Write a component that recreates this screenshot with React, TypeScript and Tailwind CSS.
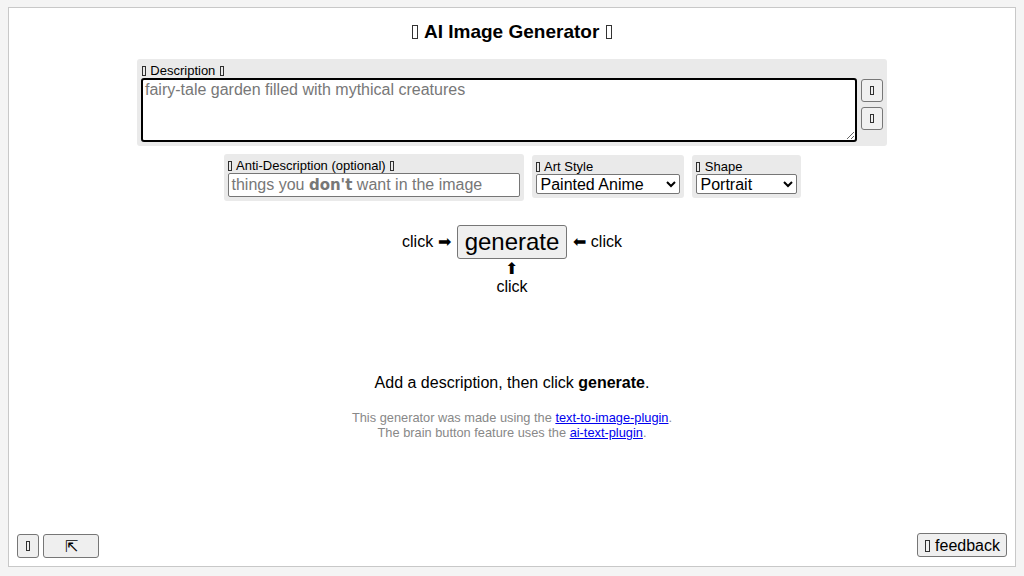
import React from "react";

const font = { fontFamily: '"Liberation Sans", Arial, sans-serif' };

function Tofu() {
  return (
    <span className="inline-block w-[0.3em] h-[0.72em] mx-[0.07em] border border-current align-[-0.05em] opacity-80" />
  );
}

export default function App() {
  return (
    <div className="w-[1024px] h-[576px] bg-[#f4f4f4] pt-[7px] px-[8px] pb-[9px]" style={font}>
      <div className="h-full border border-[#c8c8c8] bg-white flex flex-col relative">
        <h1 className="text-[19px] font-bold text-center mt-[13px] leading-[22px] text-black">
          <Tofu /> AI Image Generator <Tofu />
        </h1>
        <div className="mx-auto mt-[16px] w-[750px] bg-[#eaeaea] rounded-[3px] px-[4px] pt-[4px] pb-[4px] flex gap-[4px]">
          <div className="flex-1 flex flex-col">
            <div className="text-[13px] leading-[15px] text-black">
              <Tofu /> Description <Tofu />
            </div>
            <textarea
              className="h-[64px] border-2 border-black rounded-[3px] bg-white px-[2px] py-0 text-[16px] leading-[19px] placeholder:text-[#777] resize-y outline-none"
              placeholder="fairy-tale garden filled with mythical creatures"
              style={font}
            />
          </div>
          <div className="flex flex-col gap-[5px] pt-[16px]">
            <button className="w-[22px] h-[23px] border border-[#777] rounded-[3px] bg-[#f0f0f0] text-[13px] flex items-center justify-center">
              <Tofu />
            </button>
            <button className="w-[22px] h-[23px] border border-[#777] rounded-[3px] bg-[#f0f0f0] text-[13px] flex items-center justify-center">
              <Tofu />
            </button>
          </div>
        </div>
        <div className="flex justify-center gap-[8px] mt-[8px] items-start">
          <div className="w-[300px] bg-[#eaeaea] rounded-[3px] px-[4px] pt-[4px] pb-[4px] flex flex-col">
            <div className="text-[13px] leading-[15px] text-black">
              <Tofu /> Anti-Description (optional) <Tofu />
            </div>
            <div className="h-[24px] border border-[#767676] rounded-[2px] bg-white px-[3px] text-[16px] leading-[22px] text-[#777] whitespace-nowrap overflow-hidden">
              things you{" "}
              <b className="text-[#777]" style={{ fontFamily: '"DejaVu Sans", sans-serif', fontSize: "15px" }}>
                don't
              </b>{" "}
              want in the image
            </div>
          </div>
          <div className="w-[152px] bg-[#eaeaea] rounded-[3px] px-[4px] pt-[4px] pb-[4px] flex flex-col mt-[1px]">
            <div className="text-[13px] leading-[15px] text-black">
              <Tofu /> Art Style
            </div>
            <select
              className="h-[20px] border border-[#767676] rounded-[2px] bg-white text-[16px] leading-[18px] text-black"
              style={font}
              defaultValue="Painted Anime"
            >
              <option>Painted Anime</option>
            </select>
          </div>
          <div className="w-[109px] bg-[#eaeaea] rounded-[3px] px-[4px] pt-[4px] pb-[4px] flex flex-col mt-[1px]">
            <div className="text-[13px] leading-[15px] text-black">
              <Tofu /> Shape
            </div>
            <select
              className="h-[20px] border border-[#767676] rounded-[2px] bg-white text-[16px] leading-[18px] text-black"
              style={font}
              defaultValue="Portrait"
            >
              <option>Portrait</option>
            </select>
          </div>
        </div>
        <div className="flex flex-col items-center mt-[24px]">
          <div className="flex items-center gap-[6px] text-[16px] text-black">
            <span>click ➡</span>
            <button
              className="h-[34px] px-[7px] border border-[#767676] rounded-[3px] bg-[#efefef] text-[24px] leading-[28px] text-black"
              style={font}
            >
              generate
            </button>
            <span>⬅ click</span>
          </div>
          <div className="text-[16px] leading-[18px] text-black text-center mt-[1px]">
            ⬆<br />click
          </div>
        </div>
        <div className="text-center text-[16px] text-black mt-[78px] leading-[18px]">
          Add a description, then click <b>generate</b>.
        </div>
        <div className="text-center text-[12.8px] text-[#888] mt-[18px] leading-[15px]">
          This generator was made using the{" "}
          <a className="text-[#00e] underline" href="#">
            text-to-image-plugin
          </a>
          .<br />
          The brain button feature uses the{" "}
          <a className="text-[#00e] underline" href="#">
            ai-text-plugin
          </a>
          .
        </div>
        <div className="absolute left-[8px] bottom-[8px] flex gap-[4px]">
          <button className="w-[22px] h-[24px] border border-[#767676] rounded-[3px] bg-[#efefef] text-[13px] flex items-center justify-center">
            <Tofu />
          </button>
          <button className="w-[56px] h-[24px] border border-[#767676] rounded-[3px] bg-[#efefef] text-[16px]">⇱</button>
        </div>
        <div className="absolute right-[8px] bottom-[8px]">
          <button
            className="h-[24px] px-[6px] border border-[#767676] rounded-[3px] bg-[#efefef] text-[16px] text-black"
            style={font}
          >
            <Tofu /> feedback
          </button>
        </div>
      </div>
    </div>
  );
}
